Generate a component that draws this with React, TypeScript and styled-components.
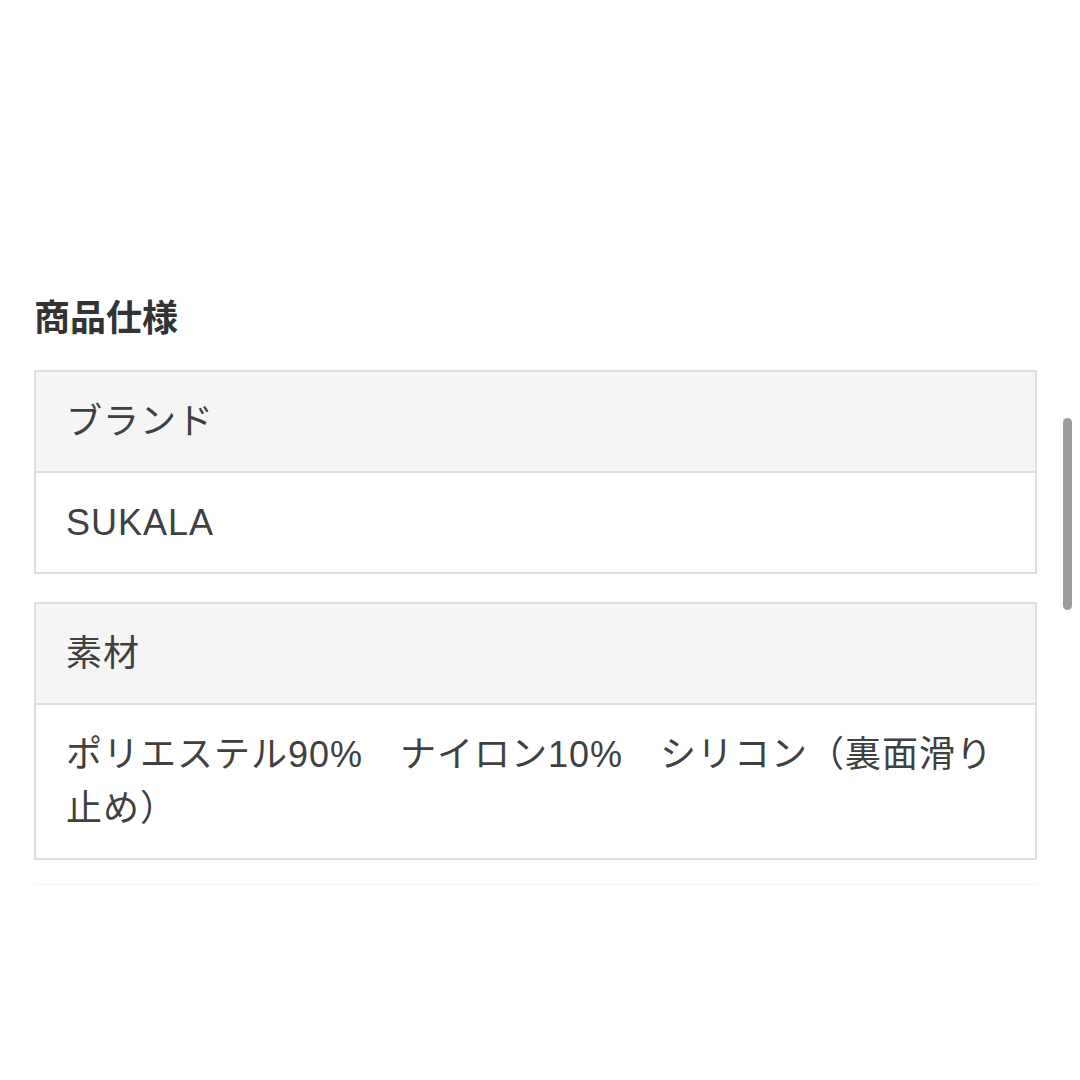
import React from "react";
import styled, { createGlobalStyle } from "styled-components";

const Global = createGlobalStyle`
  html, body { margin: 0; padding: 0; background: #ffffff; }
  body { font-family: "Liberation Sans", "Noto Sans CJK JP", sans-serif; color: #3a3a3a; }
`;

const Page = styled.div`
  position: relative;
  width: 1080px;
  height: 1080px;
  box-sizing: border-box;
  padding: 288px 43px 0 34px;
  overflow: hidden;
`;

const Heading = styled.h2`
  margin: 0 0 28px 0;
  font-family: "Noto Sans CJK JP", sans-serif;
  font-size: 36px;
  line-height: 54px;
  font-weight: 700;
  color: #333333;
`;

const Spec = styled.div`
  display: flex;
  flex-direction: column;
  gap: 28px;
`;

const Table = styled.div`
  border: 2px solid #dedede;
  display: flex;
  flex-direction: column;
`;

const Cell = styled.div<{ $head?: boolean }>`
  background: ${(p) => (p.$head ? "#f5f5f5" : "#ffffff")};
  border-top: ${(p) => (p.$head ? "none" : "2px solid #dedede")};
  padding: 23px 30px 22px 30px;
  font-size: 36px;
  line-height: 54px;
  letter-spacing: 1px;
  color: #404040;
`;

const Divider = styled.div`
  margin-top: 24px;
  height: 1px;
  background: #f4f4f4;
`;

const Scrollbar = styled.div`
  position: absolute;
  left: 1063px;
  top: 418px;
  width: 9px;
  height: 192px;
  border-radius: 5px;
  background: #9c9c9c;
`;

const rows = [
  { label: "ブランド", value: "SUKALA" },
  {
    label: "素材",
    value: "ポリエステル90%　ナイロン10%　シリコン（裏面滑り止め）",
  },
];

export default function App() {
  return (
    <>
      <Global />
      <Page>
        <Heading>商品仕様</Heading>
        <Spec>
          {rows.map((r) => (
            <Table key={r.label}>
              <Cell $head>{r.label}</Cell>
              <Cell>{r.value}</Cell>
            </Table>
          ))}
        </Spec>
        <Divider />
        <Scrollbar />
      </Page>
    </>
  );
}
